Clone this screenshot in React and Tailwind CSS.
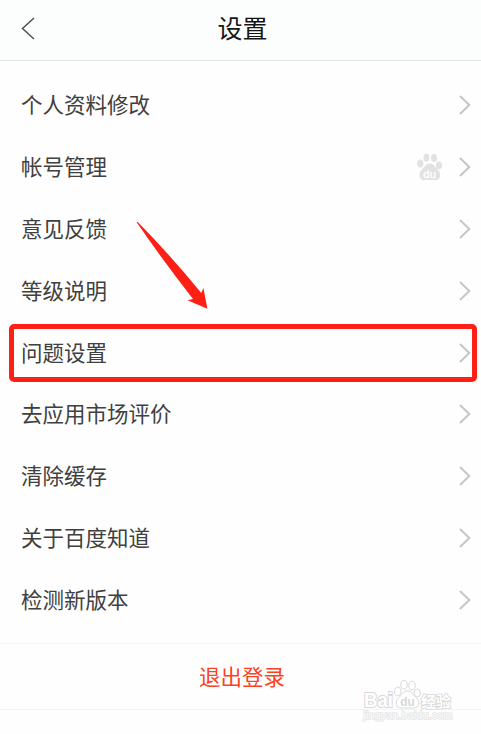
import React from "react";

const items = [
  { label: "个人资料修改" },
  { label: "帐号管理", paw: true },
  { label: "意见反馈" },
  { label: "等级说明" },
  { label: "问题设置", highlight: true },
  { label: "去应用市场评价" },
  { label: "清除缓存" },
  { label: "关于百度知道" },
  { label: "检测新版本" },
];

const PawIcon = () => (
  <svg width="26" height="28" viewBox="0 0 26 28" fill="#e2e2e2">
    <ellipse cx="3.3" cy="10.5" rx="3.1" ry="3.9" />
    <ellipse cx="9.4" cy="4.7" rx="2.9" ry="4" />
    <ellipse cx="17" cy="5" rx="3" ry="4" />
    <ellipse cx="22" cy="12.4" rx="3.1" ry="3.8" />
    <path d="M12.700 10.500C17 10.500 18 14 21 17C24.500 20.500 23.500 27 19 27H6.500C2 27 1 20.500 4.500 17C7.500 14 8.500 10.500 12.700 10.500Z" />
    <text x="12.700" y="24.500" textAnchor="middle" fontSize="11.500" fill="#fff" stroke="#fff" strokeWidth="0.300" fontFamily="Liberation Sans, sans-serif">du</text>
  </svg>
);

const Chevron = () => (
  <svg width="12" height="20" viewBox="0 0 12 20" fill="none" stroke="#c6c6c6" strokeWidth="2">
    <path d="M1 1L10.300 10L1 19" />
  </svg>
);

const Watermark = () => (
  <svg className="absolute left-[360px] top-[676px]" width="100" height="50" viewBox="0 0 100 50" fill="#fff" stroke="#d8d8d8" strokeWidth="1">
    <g fontFamily="Liberation Sans, Noto Sans CJK SC, sans-serif" paintOrder="stroke">
      <text x="4" y="31" fontSize="20" fontWeight="bold" textLength="29" lengthAdjust="spacingAndGlyphs" strokeWidth="2">Bai</text>
      <text x="61" y="30.500" fontSize="15" fontWeight="bold" textLength="30" strokeWidth="1.600">经验</text>
      <text x="3.500" y="43" fontSize="11" textLength="89" lengthAdjust="spacingAndGlyphs" fill="#fafafa" stroke="#e6e6e6" strokeWidth="1.500">jingyan.baidu.com</text>
    </g>
    <ellipse cx="37.800" cy="15.500" rx="3.200" ry="4.300" />
    <ellipse cx="44" cy="8.800" rx="3.200" ry="4.300" />
    <ellipse cx="52" cy="9.500" rx="3.200" ry="4.300" />
    <ellipse cx="57.300" cy="17" rx="3.200" ry="4" />
    <path d="M47.500 15C52 15 53 19 56.500 22C60.500 26 59 32 54 32H41C36 32 34.500 26 38.500 22C42 19 43 15 47.500 15Z" />
    <text x="47.500" y="29.500" textAnchor="middle" fontSize="12" fontWeight="bold" fill="#d8d8d8" stroke="none" fontFamily="Liberation Sans, sans-serif">du</text>
  </svg>
);

const App = () => {
  return (
    <div className="relative w-[481px] h-[734px] overflow-hidden bg-[#fefefe] text-[#404040] font-['Noto_Sans_CJK_SC',sans-serif]">
      {/* Header */}
      <header className="grid grid-cols-[1fr_auto_1fr] items-center h-[61px] pl-[21px] pr-[17px] pb-[4px] border-b border-[#e4e5e5] bg-[#fcfefe]">
        <svg width="14" height="23" viewBox="0 0 14 23" fill="none" stroke="#505050" strokeWidth="1.500">
          <path d="M13 1L1.500 11.500L13 22" />
        </svg>
        <h1 className="pb-[2px] text-[25px] leading-[34px] text-[#161616]">设置</h1>
      </header>

      {/* Settings list */}
      <ul className="pt-[13.500px]">
        {items.map((item) => (
          <li key={item.label} className="relative flex items-center justify-between h-[61.800px] pl-[21px] pr-[10px]">
            <span className="pb-[2px] text-[21.500px] leading-[30px]">{item.label}</span>
            <div className="flex items-center gap-[16px]">
              {item.paw && <PawIcon />}
              <Chevron />
            </div>
            {item.highlight && (
              <div className="absolute left-[9px] right-[4px] top-[2px] h-[58px] border-[5px] border-[#ff2015] rounded-[5px]"></div>
            )}
          </li>
        ))}
      </ul>

      {/* Logout */}
      <button className="flex items-center justify-center w-full h-[67px] mt-[12.500px] pl-[3px] pb-[2px] border-y border-[#f4f4f4] text-[21.500px] text-[#fb4225]">
        退出登录
      </button>

      <svg className="absolute left-[130px] top-[216px]" width="84" height="98" viewBox="130 216 84 98" fill="#ff2015">
        <path d="M136.500 222L137.800 222Q172 257 201.300 293L203.400 288L207.400 308.800L187.600 300.300L193 299Q164 262 136.500 222Z" />
      </svg>
      <Watermark />
    </div>
  );
};

export default App;
